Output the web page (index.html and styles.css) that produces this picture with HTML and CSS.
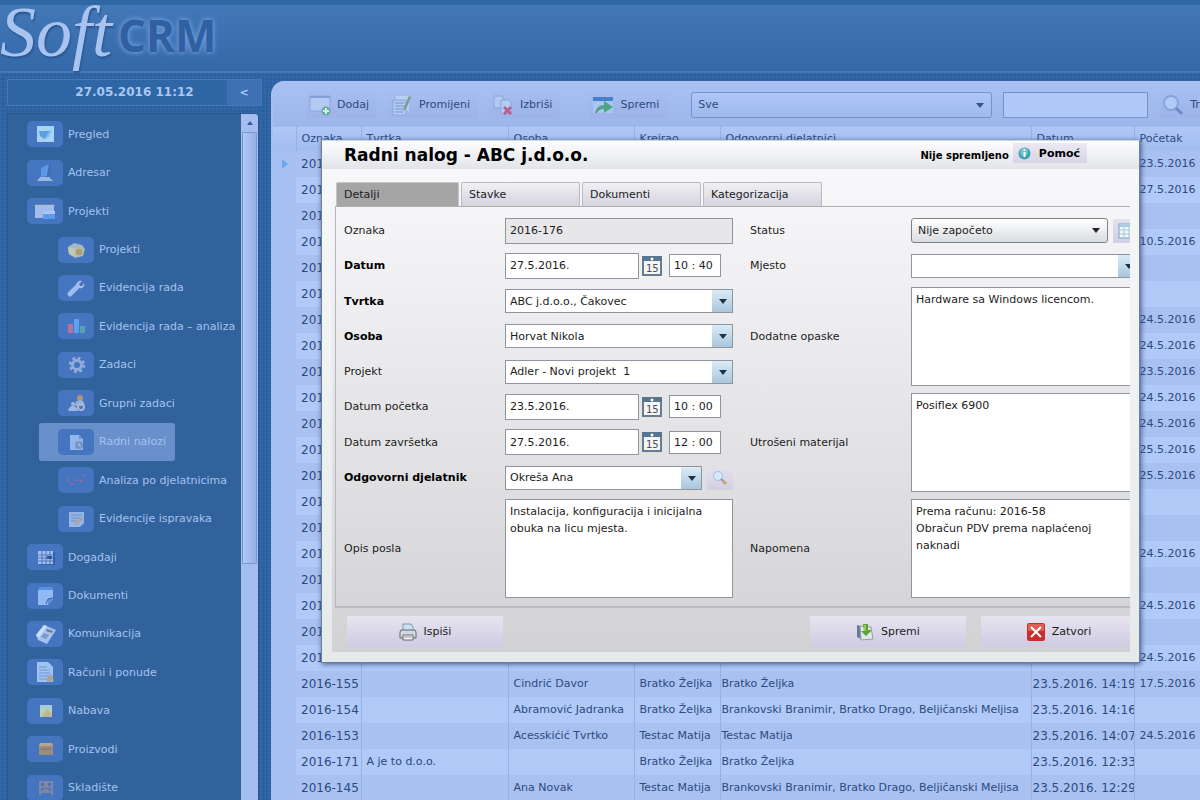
FILE: index.html
```html
<!DOCTYPE html>
<html lang="hr">
  <head>
    <meta charset="utf-8" />
    <title>Soft CRM</title>
    <meta name="viewport" content="width=device-width, initial-scale=1.0" />
    <link rel="stylesheet" href="styles.css">
  </head>
  <body>
    <header class="top">
      <span class="logo-soft">Soft</span>
      <span class="logo-crm">CRM</span>
    </header>

    <div class="layout">
      <aside class="sidebar">
        <div class="clock">
          <span class="clock-time">27.05.2016 11:12</span>
          <button class="collapse" type="button">&lt;</button>
        </div>
        <div class="menu">
          <ul class="menu-list">
            <li><a href="#"><span class="chip"><svg width="22" height="20" viewBox="0 0 22 20"><rect x="3" y="2" width="17" height="16" fill="#a9d3f5"/><path d="M5 7h11l-2 5-4 3-4-3z" fill="#5ba0dc"/><path d="M14 9l4-4-3 8-5 3z" fill="#7fc0ea"/></svg></span>Pregled</a></li>
            <li><a href="#"><span class="chip"><svg width="22" height="20" viewBox="0 0 22 20"><path d="M7 5l8-4-2 12-6 1z" fill="#5c98e6"/><path d="M15 1l2 1-1 11-3 0z" fill="#3f6fb9"/><path d="M6 14h9l4 4H3z" fill="#98b7e2"/></svg></span>Adresar</a></li>
            <li><a href="#"><span class="chip"><svg width="22" height="20" viewBox="0 0 22 20"><path d="M1 3h20v3H1z" fill="#6b7fa8"/><path d="M1 4h19v13H1z" fill="#a3bce9"/><path d="M9 10h12v8H9z" fill="#5f99ea"/><path d="M9 10h12v3H9z" fill="#a9c8f5"/></svg></span>Projekti</a></li>
            <li class="sub"><a href="#"><span class="chip"><svg width="22" height="20" viewBox="0 0 22 20"><path d="M3 7l6-4 8 2 3 4-2 7-8 2-6-4z" fill="#a3b8c5"/><path d="M3 7l7 2v8l-6-3z" fill="#c1c9b6"/><circle cx="14" cy="12" r="4" fill="#a69f78" stroke="#c4bf9c"/></svg></span>Projekti</a></li>
            <li class="sub"><a href="#"><span class="chip"><svg width="22" height="20" viewBox="0 0 22 20"><path d="M5 16l7-7" stroke="#9dbcf0" stroke-width="5" stroke-linecap="round"/><path d="M11 8c0-4 3-6 6-5l-3 3 1 2 2 0 2-3c1 4-2 6-5 5z" fill="#a3bfe9"/></svg></span>Evidencija rada</a></li>
            <li class="sub"><a href="#"><span class="chip"><svg width="22" height="20" viewBox="0 0 22 20"><path d="M3 8h5v9H3z" fill="#b9719f"/><path d="M9 3h5v14H9z" fill="#5ba2f0"/><path d="M15 10h5v7h-5z" fill="#58a2b4"/></svg></span>Evidencija rada – analiza</a></li>
            <li class="sub"><a href="#"><span class="chip"><svg width="22" height="20" viewBox="0 0 22 20"><circle cx="12" cy="10" r="6.500" fill="none" stroke="#91acda" stroke-width="3.500" stroke-dasharray="2.600 2.500"/><circle cx="12" cy="10" r="4.500" fill="none" stroke="#91acda" stroke-width="3"/></svg></span>Zadaci</a></li>
            <li class="sub"><a href="#"><span class="chip"><svg width="22" height="20" viewBox="0 0 22 20"><circle cx="15" cy="5" r="3" fill="#b5947f"/><path d="M10 13q0-6 5-6t4 6z" fill="#98b0d8"/><circle cx="8" cy="11" r="2" fill="#aeb3c4"/><path d="M3 18q1-5 5-5t5 5z" fill="#9ab8e4"/><circle cx="16" cy="14" r="3" fill="none" stroke="#a8b8d4" stroke-width="2"/></svg></span>Grupni zadaci</a></li>
            <li class="sub selected"><a href="#"><span class="chip"><svg width="22" height="20" viewBox="0 0 22 20"><path d="M5 3h9l4 4v11H5z" fill="#91b6ee"/><path d="M14 3v4h4" fill="#6c94d3"/><circle cx="14" cy="13" r="4" fill="#7893c0"/><path d="M14 11v3h2" stroke="#b4c9e8" fill="none"/></svg></span>Radni nalozi</a></li>
            <li class="sub"><a href="#"><span class="chip"><svg width="22" height="20" viewBox="0 0 22 20"><path d="M3 10l4 4 5-4 4 1 4-7" stroke="#706fae" fill="none" stroke-dasharray="3 1"/><path d="M2 9h2v2H2zM6 13h2v2H6zM11 9h2v2h-2zM15 10h2v2h-2zM18 4h2v2h-2z" fill="#a0669f"/></svg></span>Analiza po djelatnicima</a></li>
            <li class="sub"><a href="#"><span class="chip"><svg width="22" height="20" viewBox="0 0 22 20"><path d="M4 3h15v11l-4 4H4z" fill="#93b5ea"/><path d="M6 6h11M6 9h9M6 12h6" stroke="#738fbd"/><path d="M9 15l7-7 2 2-6 6z" fill="#aaa69b"/></svg></span>Evidencije ispravaka</a></li>
            <li><a href="#"><span class="chip"><svg width="22" height="20" viewBox="0 0 22 20"><rect x="5" y="5" width="16" height="13" fill="#3464a8"/><rect x="4" y="4" width="15" height="13" fill="#a4c0f0"/><path d="M4 8h15M4 11h15M4 14h15M8 4v13M12 4v13M16 4v13" stroke="#4a79bf"/><path d="M13 9h5v3h-5z" fill="#2f5797"/></svg></span>Događaji</a></li>
            <li><a href="#"><span class="chip"><svg width="22" height="20" viewBox="0 0 22 20"><path d="M5 1h14v3H5z" fill="#5591e2"/><path d="M4 4h15v9l-5 6H4z" fill="#91b9f3"/><path d="M19 12l-5 7v-6z" fill="#5c8dd8"/><path d="M12 18l2-5 5-1" stroke="#2f63ad" fill="none"/></svg></span>Dokumenti</a></li>
            <li><a href="#"><span class="chip"><svg width="22" height="20" viewBox="0 0 22 20"><path d="M2 11L10 1l12 5-9 14-9-4z" fill="#a2c2ef"/><path d="M2 11L10 1l3 1-8 12z" fill="#cadcf7"/><path d="M13 5l6 2-1 2-6-2z" fill="#7f7083"/><path d="M10 9l5 2-3 4-5-2z" fill="#7c97c5"/></svg></span>Komunikacija</a></li>
            <li><a href="#"><span class="chip"><svg width="22" height="20" viewBox="0 0 22 20"><path d="M3 0h11l5 5v15H3z" fill="#9fc3f3"/><path d="M5 5h8M5 8h11M5 11h11M5 14h9M5 17h8" stroke="#6f98d4"/><path d="M13 14l5-2 2 7-7 1z" fill="#a9a59c"/></svg></span>Računi i ponude</a></li>
            <li><a href="#"><span class="chip"><svg width="22" height="20" viewBox="0 0 22 20"><rect x="6" y="4" width="12" height="12" fill="#bacdbb"/><path d="M6 4h12v3H6z" fill="#a2c9df"/><path d="M8 14l5-6 5 5v3H9z" fill="#bcb992"/></svg></span>Nabava</a></li>
            <li><a href="#"><span class="chip"><svg width="22" height="20" viewBox="0 0 22 20"><path d="M6 4h12l1 2v10H5V6z" fill="#9a8c80"/><path d="M6 4h12l1 3H5z" fill="#b7a48a"/><path d="M7 10h10" stroke="#77716f"/></svg></span>Proizvodi</a></li>
            <li><a href="#"><span class="chip"><svg width="22" height="20" viewBox="0 0 22 20"><path d="M6 17V4h12v13M6 9h12M6 14h12" fill="none" stroke="#7f86a6" stroke-width="2"/><path d="M10 5h4v3h-4zM9 11h6v2H9z" fill="#8b8494"/></svg></span>Skladište</a></li>
          </ul>
          <div class="scrollbar">
            <span class="scroll-up"></span>
            <span class="scroll-thumb"></span>
          </div>
        </div>
      </aside>

      <main class="panel">
        <div class="toolbar">
          <button class="tool" type="button"><svg width="22" height="22" viewBox="0 0 22 22"><rect x="1" y="2" width="20" height="15" fill="#b3caf3" stroke="#8ba7da"/><path d="M1 2h20v2H1z" fill="#7f9fd7"/><circle cx="17" cy="17" r="4.500" fill="#6aab9f"/><path d="M17 14v6M14 17h6" stroke="#d6ecf3" stroke-width="2"/></svg>Dodaj</button>
          <button class="tool" type="button"><svg width="22" height="22" viewBox="0 0 22 22"><path d="M5 2h13v15H5z" fill="#bacfef"/><path d="M2 6h13v15H2z" fill="#b3cbf2" stroke="#8aa7d6"/><path d="M4 9h9M4 12h9M4 15h8M4 18h8" stroke="#7195ce"/><path d="M18 2l2 1-5 12-3 2 1-4z" fill="#7b9a91"/></svg>Promijeni</button>
          <button class="tool" type="button"><svg width="22" height="22" viewBox="0 0 22 22"><path d="M2 2h8l2 3v9H2z" fill="#b0c8f2" stroke="#88a5da"/><path d="M9 6h8l2 3v11H9z" fill="#b5ccf3" stroke="#88a5da"/><path d="M12 13l7 7M19 13l-7 7" stroke="#b5608f" stroke-width="3"/></svg>Izbriši</button>
          <button class="tool tool-save" type="button"><svg width="22" height="22" viewBox="0 0 22 22"><rect x="1" y="3" width="20" height="16" fill="#a8c6f1"/><path d="M1 3h20v4H1z" fill="#4a7fce"/><path d="M3 19q2-8 9-8V7l9 6-9 6v-4q-5 0-7 4z" fill="#4fa486"/></svg>Spremi</button>
          <span class="filter">
            <select aria-label="Filter"><option>Sve</option></select>
          </span>
          <input class="search" type="text" aria-label="Pretraga" />
          <button class="tool" type="button"><svg width="22" height="22" viewBox="0 0 22 22"><circle cx="9" cy="9" r="7" fill="#b0cbf5" stroke="#86a5dc" stroke-width="2"/><path d="M14 14l6 6" stroke="#6d8dc2" stroke-width="3"/></svg>Traži</button>
        </div>

        <table class="grid">
          <colgroup>
            <col class="c-mark" /><col class="c-id" /><col class="c-company" /><col class="c-person" />
            <col class="c-author" /><col class="c-staff" /><col class="c-date" /><col />
          </colgroup>
          <thead>
            <tr><th></th><th>Oznaka</th><th>Tvrtka</th><th>Osoba</th><th>Kreirao</th><th>Odgovorni djelatnici</th><th>Datum</th><th>Početak</th></tr>
          </thead>
          <tbody>
            <tr class="current"><td></td><td>2016</td><td></td><td></td><td></td><td></td><td></td><td>23.5.2016</td></tr>
            <tr><td></td><td>2016</td><td></td><td></td><td></td><td></td><td></td><td>27.5.2016</td></tr>
            <tr><td></td><td>2016</td><td></td><td></td><td></td><td></td><td></td><td></td></tr>
            <tr><td></td><td>2016</td><td></td><td></td><td></td><td></td><td></td><td>10.5.2016</td></tr>
            <tr><td></td><td>2016</td><td></td><td></td><td></td><td></td><td></td><td></td></tr>
            <tr><td></td><td>2016</td><td></td><td></td><td></td><td></td><td></td><td></td></tr>
            <tr><td></td><td>2016</td><td></td><td></td><td></td><td></td><td></td><td>24.5.2016</td></tr>
            <tr><td></td><td>2016</td><td></td><td></td><td></td><td></td><td></td><td>24.5.2016</td></tr>
            <tr><td></td><td>2016</td><td></td><td></td><td></td><td></td><td></td><td>23.5.2016</td></tr>
            <tr><td></td><td>2016</td><td></td><td></td><td></td><td></td><td></td><td>24.5.2016</td></tr>
            <tr><td></td><td>2016</td><td></td><td></td><td></td><td></td><td></td><td>24.5.2016</td></tr>
            <tr><td></td><td>2016</td><td></td><td></td><td></td><td></td><td></td><td>25.5.2016</td></tr>
            <tr><td></td><td>2016</td><td></td><td></td><td></td><td></td><td></td><td>25.5.2016</td></tr>
            <tr><td></td><td>2016</td><td></td><td></td><td></td><td></td><td></td><td></td></tr>
            <tr><td></td><td>2016</td><td></td><td></td><td></td><td></td><td></td><td></td></tr>
            <tr><td></td><td>2016</td><td></td><td></td><td></td><td></td><td></td><td>24.5.2016</td></tr>
            <tr><td></td><td>2016</td><td></td><td></td><td></td><td></td><td></td><td></td></tr>
            <tr><td></td><td>2016</td><td></td><td></td><td></td><td></td><td></td><td>24.5.2016</td></tr>
            <tr><td></td><td>2016</td><td></td><td></td><td></td><td></td><td></td><td></td></tr>
            <tr><td></td><td>2016</td><td></td><td></td><td>Bratko Željka</td><td>Brankovski Branimir, Bratko Drago, Beljičanski Meljisa</td><td></td><td>24.5.2016</td></tr>
            <tr><td></td><td>2016-155</td><td></td><td>Cindrić Davor</td><td>Bratko Željka</td><td>Bratko Željka</td><td>23.5.2016. 14:19</td><td>17.5.2016</td></tr>
            <tr><td></td><td>2016-154</td><td></td><td>Abramović Jadranka</td><td>Bratko Željka</td><td>Brankovski Branimir, Bratko Drago, Beljičanski Meljisa</td><td>23.5.2016. 14:16</td><td></td></tr>
            <tr><td></td><td>2016-153</td><td></td><td>Acesskićić Tvrtko</td><td>Testac Matija</td><td>Testac Matija</td><td>23.5.2016. 14:07</td><td>24.5.2016</td></tr>
            <tr><td></td><td>2016-171</td><td>A je to d.o.o.</td><td></td><td>Bratko Željka</td><td>Bratko Željka</td><td>23.5.2016. 12:33</td><td></td></tr>
            <tr><td></td><td>2016-145</td><td></td><td>Ana Novak</td><td>Testac Matija</td><td>Brankovski Branimir, Bratko Drago, Beljičanski Meljisa</td><td>23.5.2016. 12:29</td><td></td></tr>
          </tbody>
        </table>
      </main>
    </div>

    <section class="dialog" role="dialog" aria-labelledby="dialog-title">
      <div class="dialog-head">
        <h1 id="dialog-title">Radni nalog - ABC j.d.o.o.</h1>
        <span class="state">Nije spremljeno</span>
        <button class="help" type="button"><svg width="13" height="13" viewBox="0 0 13 13"><circle cx="6.500" cy="6.500" r="6" fill="#3da0b4"/><circle cx="6" cy="5" r="4" fill="#6cc3cf"/><path d="M6.500 2v2M6.500 5v5" stroke="#fff" stroke-width="2"/></svg>Pomoć</button>
      </div>

      <div class="dialog-body">
        <div class="tabs">
          <button class="tab active" type="button">Detalji</button>
          <button class="tab" type="button">Stavke</button>
          <button class="tab" type="button">Dokumenti</button>
          <button class="tab" type="button">Kategorizacija</button>
        </div>

        <form class="details" id="order-form">
          <div class="column">
            <label for="code">Oznaka</label>
            <input type="text" id="code" value="2016-176" readonly />

            <label class="required" for="date">Datum</label>
            <div class="when">
              <input type="text" id="date" value="27.5.2016." />
              <button class="calendar" type="button" aria-label="Kalendar"><svg width="20" height="20" viewBox="0 0 20 20"><rect x="1" y="1" width="18" height="18" fill="#f4f5f7" stroke="#697b8e" stroke-width="2"/><path d="M0 0h20v5H0z" fill="#58758f"/><circle cx="10" cy="3" r="1.500" fill="#fff"/><text x="4" y="16">15</text></svg></button>
              <input class="time" type="text" value="10 : 40" aria-label="Vrijeme" />
            </div>

            <label class="required" for="company">Tvrtka</label>
            <span class="combo"><select id="company"><option>ABC j.d.o.o., Čakovec</option></select></span>

            <label class="required" for="person">Osoba</label>
            <span class="combo"><select id="person"><option>Horvat Nikola</option></select></span>

            <label for="project">Projekt</label>
            <span class="combo"><select id="project"><option>Adler - Novi projekt &nbsp;1</option></select></span>

            <label for="start">Datum početka</label>
            <div class="when">
              <input type="text" id="start" value="23.5.2016." />
              <button class="calendar" type="button" aria-label="Kalendar"><svg width="20" height="20" viewBox="0 0 20 20"><rect x="1" y="1" width="18" height="18" fill="#f4f5f7" stroke="#697b8e" stroke-width="2"/><path d="M0 0h20v5H0z" fill="#58758f"/><circle cx="10" cy="3" r="1.500" fill="#fff"/><text x="4" y="16">15</text></svg></button>
              <input class="time" type="text" value="10 : 00" aria-label="Vrijeme početka" />
            </div>

            <label for="end">Datum završetka</label>
            <div class="when">
              <input type="text" id="end" value="27.5.2016." />
              <button class="calendar" type="button" aria-label="Kalendar"><svg width="20" height="20" viewBox="0 0 20 20"><rect x="1" y="1" width="18" height="18" fill="#f4f5f7" stroke="#697b8e" stroke-width="2"/><path d="M0 0h20v5H0z" fill="#58758f"/><circle cx="10" cy="3" r="1.500" fill="#fff"/><text x="4" y="16">15</text></svg></button>
              <input class="time" type="text" value="12 : 00" aria-label="Vrijeme završetka" />
            </div>

            <label class="required" for="staff">Odgovorni djelatnik</label>
            <div class="lookup">
              <span class="combo"><select id="staff"><option>Okreša Ana</option></select></span>
              <button class="square" type="button" aria-label="Traži djelatnika"><svg width="16" height="16" viewBox="0 0 16 16"><circle cx="6" cy="6" r="4.500" fill="#d3e9fa" stroke="#9bc0e3"/><path d="M9 9l2 2" stroke="#8392a5" stroke-width="2"/><path d="M11 11l3 3" stroke="#c9a17b" stroke-width="3"/></svg></button>
            </div>

            <label class="tall" for="work">Opis posla</label>
            <textarea class="tall" id="work">Instalacija, konfiguracija i inicijalna obuka na licu mjesta.</textarea>
          </div>

          <div class="column">
            <label for="status">Status</label>
            <div class="lookup">
              <span class="status"><select id="status"><option>Nije započeto</option></select></span>
              <button class="square" type="button" aria-label="Povijest statusa"><svg width="16" height="16" viewBox="0 0 16 16"><rect x="1" y="1" width="14" height="14" fill="#f0f6fa" stroke="#7ba4bf"/><path d="M1 2h14v2H1z" fill="#a9cde2"/><path d="M1 7h14M1 11h14M6 4v11M11 4v11" stroke="#a5c9d8"/></svg></button>
            </div>

            <label for="place">Mjesto</label>
            <span class="combo"><select id="place"><option></option></select></span>

            <label class="tall" for="notes">Dodatne opaske</label>
            <textarea class="tall" id="notes">Hardware sa Windows licencom.</textarea>

            <label class="tall" for="material">Utrošeni materijal</label>
            <textarea class="tall" id="material">Posiflex 6900</textarea>

            <label class="tall" for="remark">Napomena</label>
            <textarea class="tall" id="remark">Prema računu: 2016-58
Obračun PDV prema naplaćenoj naknadi</textarea>
          </div>
        </form>

        <div class="actions">
          <button class="action" type="button"><svg width="18" height="18" viewBox="0 0 18 18"><path d="M4 8V1h8l2 3v4z" fill="#c9e1f5" stroke="#8097ad"/><path d="M2 7h14l1 2v6H1V9z" fill="#d5d8dc" stroke="#606770"/><path d="M4 12h10v5H4z" fill="#fafafa" stroke="#606770"/><path d="M5 14h8" stroke="#8a929a"/></svg>Ispiši</button>
          <button class="action push" form="order-form" type="submit"><svg width="18" height="18" viewBox="0 0 18 18"><path d="M1 2l4 1v13l-4-2z" fill="#68779b"/><path d="M4 3l11 1 2 12-12 1z" fill="#dfe6e8" stroke="#93a09f"/><path d="M7 1h5v6h4l-6 6-5-5h3z" fill="#5da333"/><path d="M8 2h2v6H8z" fill="#9acb63"/></svg>Spremi</button>
          <button class="action" type="button"><svg width="18" height="18" viewBox="0 0 18 18"><rect x="0" y="0" width="18" height="18" rx="2" fill="#c9302c"/><path d="M1 1h16v7H1z" fill="#dd5f55"/><path d="M4 4l10 10M14 4L4 14" stroke="#fff" stroke-width="2"/></svg>Zatvori</button>
        </div>
      </div>
    </section>
  </body>
</html>
```
FILE: styles.css
```css
:root {
  --text: 11px;
  --ink: #2c4a80;
  --line: #98b1e3;
}

* {
  box-sizing: border-box;
}

body,
input,
select,
textarea,
button {
  font-family: "DejaVu Sans", Verdana, sans-serif;
  font-size: var(--text);
}

body {
  margin: 0;
  height: 100vh;
  overflow: hidden;
  display: flex;
  flex-direction: column;
  color: var(--ink);
  background-color: #3369a8;
  background-image:
    repeating-linear-gradient(to right, transparent 0 2px, rgba(30, 80, 145, 0.2) 2px 4px),
    repeating-linear-gradient(to bottom, transparent 0 2px, rgba(30, 80, 145, 0.2) 2px 4px);
}

button,
select {
  border: 0;
  color: inherit;
}

svg {
  flex: none;
}

/* header */
.top {
  flex: none;
  height: 73px;
  display: flex;
  align-items: flex-start;
  gap: 6px;
  border-top: 5px solid #2f67a5;
  border-bottom: 2px solid #4377b8;
  background: linear-gradient(#4277b8, #3469a9);
}

.logo-soft {
  font: italic 72px/54px "Liberation Serif", serif;
  color: #a9c3f0;
  text-shadow: 1px 2px 2px #2a5690;
}

.logo-crm {
  font: bold 44px/60px "Open Sans", sans-serif;
  color: #3060a0;
  text-shadow: 0 0 4px #6d9bdc, 0 0 6px #6d9bdc;
}

.layout {
  flex: 1;
  min-height: 0;
  display: flex;
  gap: 9px;
  padding-left: 7px;
}

/* sidebar */
.sidebar {
  flex: none;
  width: 255px;
  padding-top: 6px;
  display: flex;
  flex-direction: column;
  gap: 7px;
}

.clock {
  display: flex;
  height: 27px;
  border: 1px solid #4679bc;
  background: #2f66a5;
  color: #a9c8f3;
  font-size: 12px;
  font-weight: bold;
}

.clock-time {
  flex: 1;
  padding-left: 34px;
  text-align: center;
  line-height: 25px;
}

.collapse {
  width: 34px;
  background: #3d71b4;
  font-weight: bold;
}

.menu {
  flex: 1;
  min-height: 0;
  width: 252px;
  display: flex;
  overflow: hidden;
  border: 1px solid #2a5791;
  border-bottom: 0;
  border-radius: 4px 4px 0 0;
  background: #32629c;
}

.menu-list {
  flex: 1;
  min-width: 0;
  height: calc(100vh - 107px);
  margin: 0;
  padding: 1px 0 0;
  list-style: none;
  display: grid;
  grid-auto-rows: 1fr;
  overflow: hidden;
}

.menu-list a {
  display: flex;
  align-items: center;
  gap: 5px;
  width: fit-content;
  height: 100%;
  padding-left: 19px;
  color: #a3c3f0;
  text-decoration: none;
  white-space: nowrap;
}

.menu-list .sub {
  padding-left: 31px;
}

.menu-list .selected a {
  padding-right: 9px;
  border-radius: 3px;
  background: #6990cb;
}

.chip {
  display: flex;
  align-items: center;
  justify-content: center;
  width: 36px;
  height: 26px;
  border-radius: 5px;
  background: #4475be;
}

.scrollbar {
  flex: none;
  width: 17px;
  display: flex;
  flex-direction: column;
  background: #a5beef;
}

.scroll-up {
  height: 18px;
  display: flex;
  align-items: center;
  justify-content: center;
}

.scroll-up::after {
  content: "";
  border: 3px solid transparent;
  border-top: 0;
  border-bottom: 4px solid #34588f;
}

.scroll-thumb {
  height: 63%;
  margin: 0 1px;
  border: 1px solid #7797d2;
  border-radius: 1px;
  background: linear-gradient(to right, #b1c8f7, #95afe5);
}

/* work order list */
.panel {
  flex: 1;
  min-width: 0;
  margin-top: 8px;
  padding-left: 2px;
  overflow: hidden;
  border-radius: 14px 0 0 0;
  background: #a7bff0;
}

.toolbar {
  display: flex;
  align-items: center;
  gap: 11px;
  height: 44px;
  padding: 3px 0 0 33px;
  background: linear-gradient(#a9c1f3, #9db7ea);
}

.tool {
  flex: none;
  display: flex;
  align-items: center;
  gap: 6px;
  height: 26px;
  padding: 0 8px 0 3px;
  border-radius: 3px;
  background: linear-gradient(#a6bdf0, #9db3e9);
}

.tool-save {
  margin: 0 13px 0 18px;
}

.filter {
  flex: none;
  position: relative;
  width: 301px;
}

.filter select {
  width: 100%;
  height: 26px;
  padding: 0 6px;
  appearance: none;
  border: 1px solid #7493cd;
  border-radius: 3px;
  background: linear-gradient(#aec7f7, #9fb9eb);
}

.filter::after,
.status::after,
.combo::after {
  content: "";
  position: absolute;
  right: 8px;
  top: 11px;
  border: 4px solid transparent;
  border-top: 5px solid #36558d;
  border-bottom: 0;
  pointer-events: none;
}

.search {
  flex: none;
  width: 145px;
  height: 26px;
  border: 1px solid #7493cd;
  background: #afc8f7;
}

.grid {
  width: 100%;
  table-layout: fixed;
  border-collapse: collapse;
}

.c-mark { width: 23px; }
.c-id { width: 65px; }
.c-company { width: 147px; }
.c-person { width: 126px; }
.c-author { width: 86px; }
.c-staff { width: 311px; }
.c-date { width: 103px; }

.grid th,
.grid td {
  height: 26px;
  padding: 0 0 0 5px;
  border-right: 1px solid var(--line);
  font-weight: normal;
  text-align: left;
  white-space: nowrap;
  overflow: hidden;
}

.grid th {
  height: 25px;
  border-top: 1px solid var(--line);
  background: linear-gradient(#aec7f7, #a3bcef);
}

.grid td:nth-child(6),
.grid td:nth-child(7) {
  padding-left: 1px;
}

.grid th:last-child,
.grid td:last-child {
  border-right: 0;
}

.grid td:nth-child(2),
.grid td:nth-child(7) {
  font-size: 12px;
}

.grid tbody tr:nth-child(odd) {
  background: #a9c1f1;
}

.grid tbody tr:nth-child(even) {
  background: #b0c9f7;
}

.grid td:first-child {
  border-right: 0;
  background: #a6c0f1;
}

.grid .current td:first-child::before {
  content: "";
  display: block;
  margin-left: 4px;
  width: 0;
  border: 5px solid transparent;
  border-left: 6px solid #71a6ec;
  border-right: 0;
}

/* dialog */
.dialog {
  position: absolute;
  top: 140px;
  left: 321px;
  right: 60px;
  padding: 0 9px 10px 10px;
  border: 1px solid #6b7f9b;
  border-top-color: #cdd5e0;
  background: linear-gradient(#f7f8fa, #e5e9e9);
  box-shadow: 1px 1px 5px #3c5788;
  color: #1c1c1c;
}

.dialog-head {
  display: flex;
  gap: 4px;
  height: 28px;
  margin: 0 -9px 0 -10px;
  padding: 2px 52px 4px 22px;
  background: linear-gradient(#fdfdfe, #e2e4e8);
  color: #000;
  font-weight: bold;
}

.dialog-head h1 {
  flex: 1;
  margin: 0;
  font-size: 17px;
  line-height: 24px;
}

.state {
  font-size: 10px;
  line-height: 26px;
}

.help {
  display: flex;
  align-items: center;
  gap: 8px;
  height: 20px;
  padding: 0 7px 0 5px;
  background: linear-gradient(#ebe9f2, #d8d4e6);
  font-weight: bold;
}

.dialog-body {
  overflow: hidden;
  background: linear-gradient(#f8f8fa, #f1f1f3 20%, #d2d2d5);
}

.tabs {
  display: flex;
  gap: 2px;
  margin-left: 3px;
  padding: 13px 0 0 1px;
  border-bottom: 1px solid #aeb0b4;
}

.tab {
  width: 119px;
  height: 24px;
  padding: 0 0 0 7px;
  text-align: left;
  border: 1px solid #bbbac3;
  border-bottom: 0;
  border-radius: 2px 2px 0 0;
  background: linear-gradient(#f0f0f4, #d5d3df);
}

.tab.active {
  width: 123px;
  border-color: #c5c5c5;
  background: #a5a5a5;
}

.details {
  display: flex;
  gap: 17px;
  height: 401px;
  margin-left: 3px;
  padding: 6px 0 5px 8px;
  border-left: 1px solid #b5b7bc;
  border-bottom: 2px solid #bbbbbf;
}

.column {
  flex: none;
  display: grid;
  grid-template-columns: 161px 228px;
  grid-template-rows: repeat(11, 1fr);
  align-items: center;
}

.column > .tall {
  grid-row: span 3;
}

.required {
  color: #000;
  font-weight: bold;
}

.details input,
.details textarea,
.combo select {
  width: 100%;
  height: 26px;
  padding: 0 4px;
  color: #1c1c1c;
  border: 1px solid #8d959f;
  border-radius: 0;
  background: #fff;
}

.details input[readonly] {
  background: #e7e7e9;
}

.details textarea {
  height: 99px;
  padding: 3px 4px;
  line-height: 17px;
  resize: none;
}

.when {
  display: flex;
  align-items: center;
  gap: 3px;
}

.when input {
  width: 134px;
}

.when .time {
  width: 52px;
  height: 23px;
  margin-left: 4px;
}

.calendar {
  display: flex;
  padding: 0;
  background: none;
}

.calendar text {
  font-size: 10px;
  fill: #4c4c58;
}

.combo,
.status {
  position: relative;
  flex: 1;
}

.combo select {
  display: block;
  height: 24px;
  appearance: none;
  background: linear-gradient(#dcebf6, #a9c6dd) right / 20px 100% no-repeat #fff;
}

.combo::after {
  right: 6px;
  top: 10px;
  border-top-color: #1f3348;
}

.lookup {
  display: flex;
  align-items: center;
  gap: 5px;
}

.status select {
  display: block;
  width: 100%;
  height: 25px;
  padding: 0 6px;
  appearance: none;
  border: 1px solid #7d8288;
  border-radius: 3px;
  background: linear-gradient(#fff, #d9dce1);
}

.status::after {
  top: 10px;
  border-top-color: #222;
}

.square {
  display: flex;
  align-items: center;
  justify-content: center;
  width: 26px;
  height: 24px;
  padding: 0;
  background: linear-gradient(#e4e1ec, #d3cfe2);
}

.actions {
  display: flex;
  gap: 15px;
  width: 805px;
  padding: 8px 0 5px 15px;
}

.action {
  display: flex;
  align-items: center;
  justify-content: center;
  gap: 7px;
  width: 156px;
  height: 31px;
  background: linear-gradient(#e7e4f0, #cfcbe2);
}

.action.push {
  margin-left: auto;
}
```
